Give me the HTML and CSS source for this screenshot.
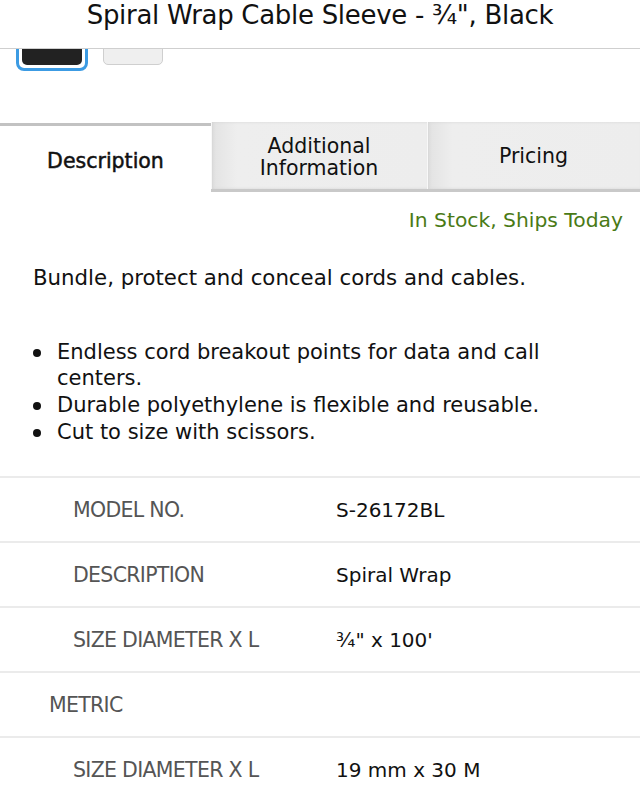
FILE: index.html
```html
<!DOCTYPE html>
<html>
<head>
<meta charset="utf-8">
<link rel="stylesheet" href="styles.css">
</head>
<body>
<header class="page-header">
  <h1 class="title">Spiral Wrap Cable Sleeve - &frac34;", Black</h1>
</header>
<div class="swatches">
  <div class="swatch selected"><div class="swatch-color black"></div></div>
  <div class="swatch"><div class="swatch-color white"></div></div>
</div>
<nav class="tabs">
  <div class="tab active">Description</div>
  <div class="tab">Additional<br>Information</div>
  <div class="tab">Pricing</div>
</nav>
<p class="stock">In Stock, Ships Today</p>
<p class="intro">Bundle, protect and conceal cords and cables.</p>
<ul class="features">
  <li>Endless cord breakout points for data and call centers.</li>
  <li>Durable polyethylene is flexible and reusable.</li>
  <li>Cut to size with scissors.</li>
</ul>
<div class="specs">
  <div class="row"><div class="label">MODEL NO.</div><div class="value">S-26172BL</div></div>
  <div class="row"><div class="label">DESCRIPTION</div><div class="value">Spiral Wrap</div></div>
  <div class="row"><div class="label">SIZE DIAMETER X L</div><div class="value">&frac34;" x 100'</div></div>
  <div class="row group"><div class="label">METRIC</div><div class="value"></div></div>
  <div class="row"><div class="label">SIZE DIAMETER X L</div><div class="value">19 mm x 30 M</div></div>
</div>
</body>
</html>
```
FILE: styles.css
```css
html, body {
  margin: 0;
  padding: 0;
  background: #fff;
}
body {
  font-family: "DejaVu Sans", "Liberation Sans", sans-serif;
  color: #111;
  width: 640px;
}
.page-header {
  height: 48px;
  border-bottom: 1px solid #cfcfcf;
  box-sizing: content-box;
}
.title {
  margin: 0;
  font-weight: normal;
  font-size: 26px;
  line-height: 31px;
  text-align: center;
  letter-spacing: -0.3px;
}
.swatches {
  height: 22px;
  overflow: hidden;
  display: flex;
  align-items: flex-end;
  gap: 9px;
  padding-left: 16px;
}
.swatch {
  border: 3px solid transparent;
  border-radius: 8px;
  padding: 3px;
}
.swatch.selected {
  border-color: #3c9be3;
}
.swatch-color {
  width: 60px;
  height: 40px;
  border-radius: 5px;
  box-sizing: border-box;
}
.swatch-color.black {
  background: #222;
}
.swatch-color.white {
  background: #efefef;
  border: 1px solid #cfcfcf;
}
.tabs {
  margin-top: 51px;
  display: flex;
  height: 70px;
}
.tab {
  flex: 1;
  display: flex;
  align-items: center;
  justify-content: center;
  text-align: center;
  font-size: 20.5px;
  line-height: 22px;
  background: linear-gradient(90deg, #e2e2e2 0%, #eeeeee 12%, #ededed 100%);
  border-bottom: 3px solid #c9c9c9;
  box-shadow: inset 1px 0 0 #f8f8f8, inset 2px 0 3px #d4d4d4;
  box-sizing: border-box;
  color: #111;
}
.tab.active {
  flex: 0 0 211px;
  background: #fff;
  border-bottom: none;
  border-top: 3px solid #c2c2c2;
  box-shadow: none;
  -webkit-text-stroke: 0.5px #111;
  margin-top: 1px;
  height: 71px;
  padding-top: 2px;
}
.tab:nth-child(2) {
  flex: 0 0 216px;
  padding-top: 3px;
}
.tab:nth-child(3) {
  padding-top: 1px;
}
.stock {
  margin: 15px 17px 0 0;
  text-align: right;
  color: #4a7a16;
  font-size: 20.3px;
  line-height: 26px;
}
.intro {
  margin: 32px 0 0 33px;
  font-size: 21.3px;
  line-height: 26px;
}
.features {
  list-style: none;
  margin: 48px 0 0 0;
  padding-left: 57px;
  padding-right: 60px;
  font-size: 21px;
  line-height: 26px;
}
.features li {
  position: relative;
  margin-bottom: 1px;
}
.features li::before {
  content: "";
  position: absolute;
  left: -24px;
  top: 10px;
  width: 8px;
  height: 8px;
  border-radius: 50%;
  background: #111;
}
.specs {
  margin-top: 31px;
}
.row {
  display: grid;
  grid-template-columns: 336px 1fr;
  align-items: center;
  height: 65px;
  border-top: 2px solid #ebebeb;
  box-sizing: border-box;
  font-size: 20px;
}
.label {
  padding-left: 73px;
  color: #555;
  font-size: 20.5px;
  letter-spacing: -0.7px;
}
.row.group .label {
  padding-left: 49px;
}
.value {
  color: #111;
}
```
